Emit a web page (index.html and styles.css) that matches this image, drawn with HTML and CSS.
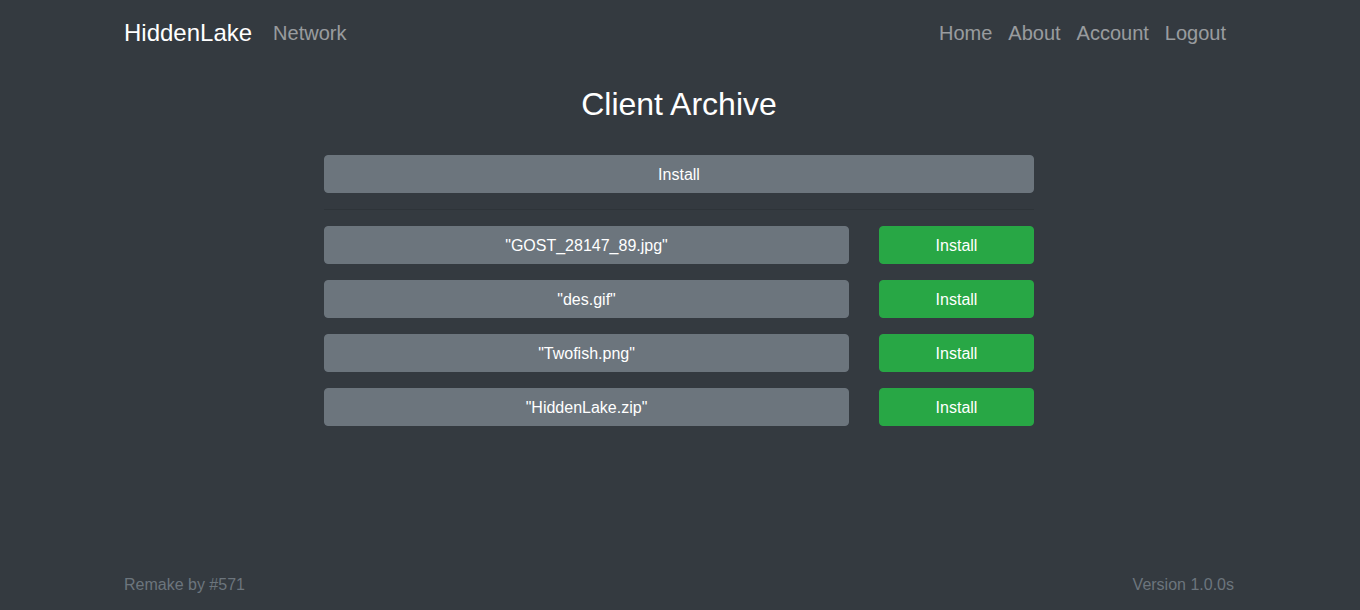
FILE: index.html
```html
<!DOCTYPE html>
<html lang="en">
<head>
<meta charset="utf-8">
<meta name="viewport" content="width=device-width, initial-scale=1">
<title>HiddenLake</title>
<link rel="stylesheet" href="styles.css">
</head>
<body>
<header class="container navbar">
  <a class="brand" href="#">HiddenLake</a>
  <nav class="nav nav-left"><a href="#">Network</a></nav>
  <nav class="nav"><a href="#">Home</a><a href="#">About</a><a href="#">Account</a><a href="#">Logout</a></nav>
</header>
<main class="archive">
  <h2 class="title">Client Archive</h2>
  <button class="btn" type="button">Install</button>
  <hr class="divider">
  <div class="files">
    <div class="file"><a class="btn" href="#">"GOST_28147_89.jpg"</a><button class="btn btn-success" type="button">Install</button></div>
    <div class="file"><a class="btn" href="#">"des.gif"</a><button class="btn btn-success" type="button">Install</button></div>
    <div class="file"><a class="btn" href="#">"Twofish.png"</a><button class="btn btn-success" type="button">Install</button></div>
    <div class="file"><a class="btn" href="#">"HiddenLake.zip"</a><button class="btn btn-success" type="button">Install</button></div>
  </div>
</main>
<footer class="container footer"><span>Remake by #571</span><span>Version 1.0.0s</span></footer>
</body>
</html>
```
FILE: styles.css
```css
* { box-sizing: border-box; }
body {
  margin: 0;
  padding-right: 2px;
  min-height: 100vh;
  display: flex;
  flex-direction: column;
  background: #343a40;
  color: #fff;
  font: 16px/24px "Liberation Sans", Arial, sans-serif;
}
a { color: inherit; text-decoration: none; }
.container {
  width: 100%;
  max-width: 1140px;
  margin: 0 auto;
  padding: 0 15px;
}
.navbar {
  display: flex;
  align-items: center;
  padding-top: 8px;
  padding-bottom: 8px;
}
.brand { margin-right: 13px; font-size: 24px; line-height: 36px; }
.nav { display: flex; font-size: 20px; line-height: 30px; color: rgba(255, 255, 255, 0.5); }
.nav-left { margin-right: auto; }
.nav a { padding: 10px 8px; }
.nav a:hover { color: rgba(255, 255, 255, 0.75); }
.archive {
  width: 100%;
  max-width: 740px;
  margin: 0 auto;
  padding: 19px 15px;
}
.title { margin: 0 0 32px; font-size: 32px; font-weight: 400; line-height: 38px; text-align: center; }
.btn {
  display: block;
  width: 100%;
  padding: 7px 12px 5px;
  border: 1px solid #6c757d;
  border-radius: 4px;
  background: #6c757d;
  color: #fff;
  font: inherit;
  text-align: center;
  cursor: pointer;
}
.btn-success { border-color: #28a745; background: #28a745; }
.divider { margin: 16px 0; border: 0; border-top: 1px solid rgba(0, 0, 0, 0.1); }
.files { display: grid; gap: 16px; }
.file { display: grid; grid-template-columns: minmax(0, 525fr) minmax(0, 155fr); gap: 30px; }
.footer {
  display: flex;
  justify-content: space-between;
  margin-top: auto;
  padding-top: 8px;
  padding-bottom: 13px;
  color: #6c757d;
}
```
